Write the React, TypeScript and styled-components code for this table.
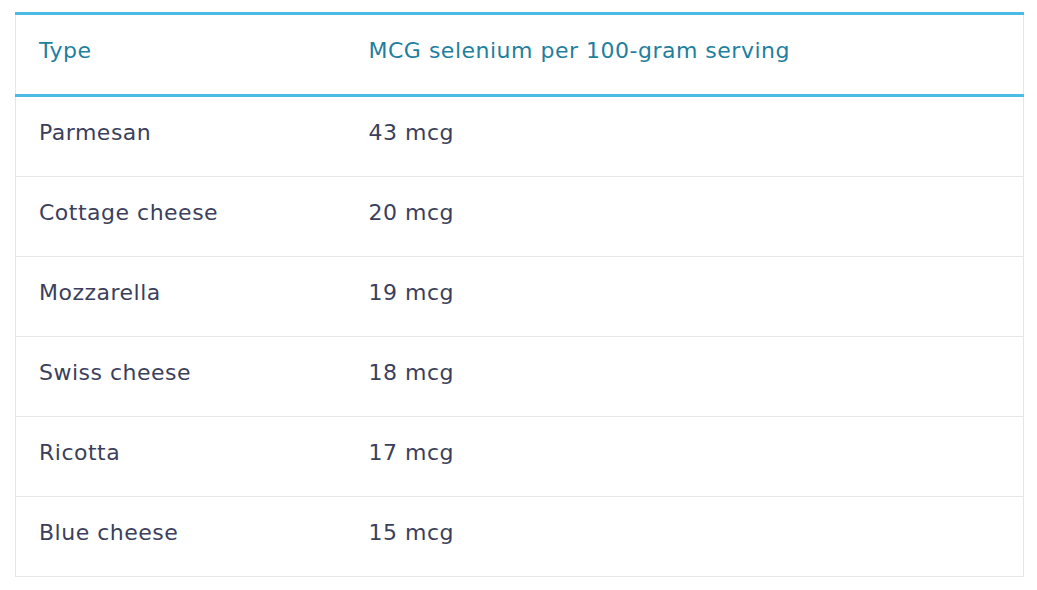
import React from "react";
import styled, { createGlobalStyle } from "styled-components";

const GlobalStyle = createGlobalStyle`
  html, body { margin: 0; padding: 0; background: #ffffff; }
  body { font-family: "DejaVu Sans", "Liberation Sans", sans-serif; }
`;

const Page = styled.div`
  padding: 12px 13px 0 15px;
`;

const Table = styled.table`
  width: 1009px;
  border-collapse: collapse;
  table-layout: fixed;
  font-family: "DejaVu Sans", "Liberation Sans", sans-serif;
  font-size: 22px;
  letter-spacing: 0.5px;
`;

const HeadCell = styled.th<{ $width?: number }>`
  width: ${(p) => (p.$width ? `${p.$width}px` : "auto")};
  box-sizing: border-box;
  height: 82px;
  padding: 0 23px 8px;
  text-align: left;
  font-weight: 400;
  color: #1f7fa0;
  border-top: 3px solid #4bbbe6;
  border-bottom: 3px solid #4bbbe6;
  border-left: 1px solid #e6e6e6;
  border-right: 1px solid #e6e6e6;
  vertical-align: middle;
  &:first-child { border-right: none; }
  &:last-child { border-left: none; }
`;

const Row = styled.tr``;

const Cell = styled.td`
  height: 71px;
  padding: 0 23px 8px;
  color: #3b3f5c;
  border-bottom: 1px solid #e6e6e6;
  border-left: 1px solid #e6e6e6;
  border-right: 1px solid #e6e6e6;
  vertical-align: middle;
  &:first-child { border-right: none; }
  &:last-child { border-left: none; }
`;

const rows: [string, string][] = [
  ["Parmesan", "43 mcg"],
  ["Cottage cheese", "20 mcg"],
  ["Mozzarella", "19 mcg"],
  ["Swiss cheese", "18 mcg"],
  ["Ricotta", "17 mcg"],
  ["Blue cheese", "15 mcg"],
];

export default function App() {
  return (
    <>
      <GlobalStyle />
      <Page>
        <Table>
          <thead>
            <tr>
              <HeadCell $width={330}>Type</HeadCell>
              <HeadCell>MCG selenium per 100-gram serving</HeadCell>
            </tr>
          </thead>
          <tbody>
            {rows.map(([type, amount]) => (
              <Row key={type}>
                <Cell>{type}</Cell>
                <Cell>{amount}</Cell>
              </Row>
            ))}
          </tbody>
        </Table>
      </Page>
    </>
  );
}
